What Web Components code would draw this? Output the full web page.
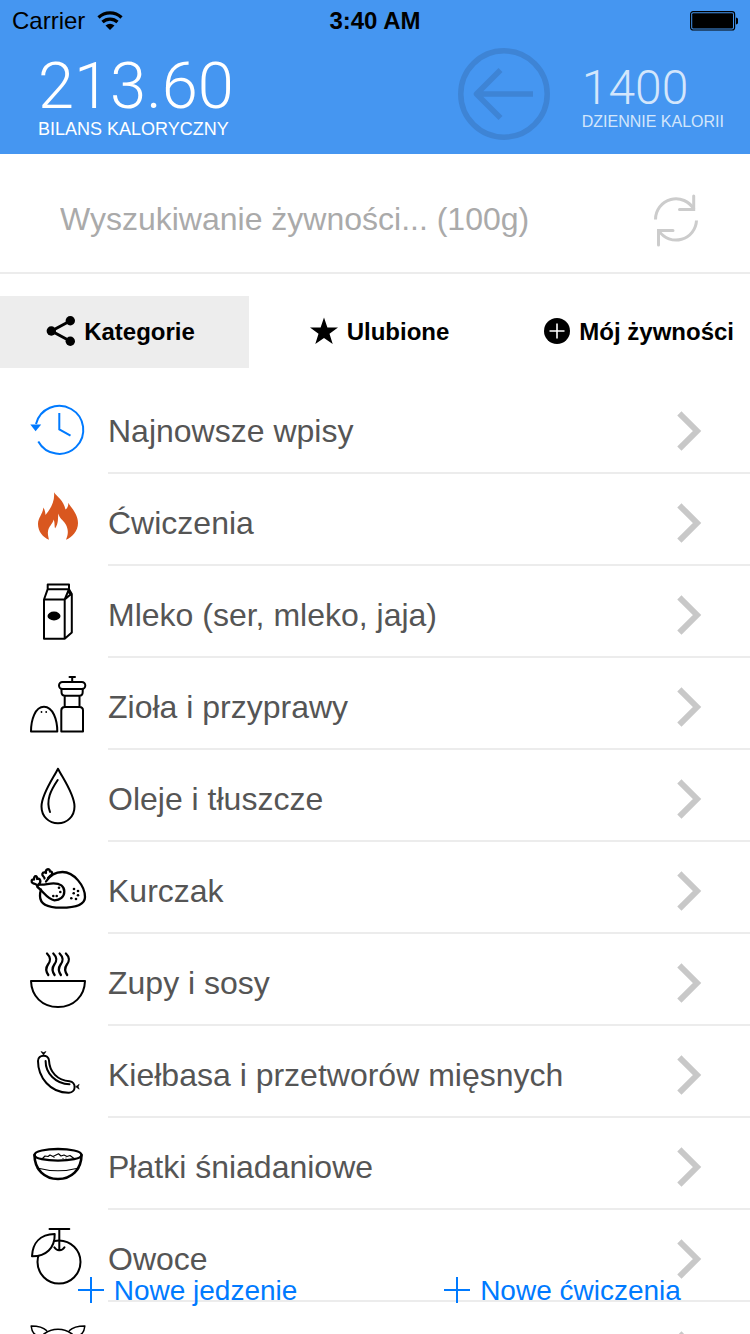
<!DOCTYPE html>
<html lang="pl">
<head>
<meta charset="utf-8">
<meta name="viewport" content="width=device-width, initial-scale=1">
<title>Bilans kaloryczny</title>
<style>
  html, body { margin: 0; height: 100%; }
  body {
    font-family: "Liberation Sans", Arial, sans-serif;
    background: #fff;
    color: #555;
    --blue: #4596f1;
    --tint: #007aff;
    --rule: #ececec;
  }
</style>
</head>
<body>
<calorie-app></calorie-app>

<script>
const define = (name, html, setup) => {
  const template = document.createElement('template');
  template.innerHTML = html;
  customElements.define(name, class extends HTMLElement {
    constructor() {
      super();
      this.attachShadow({ mode: 'open' }).append(template.content.cloneNode(true));
    }
    connectedCallback() { if (setup) setup(this, this.shadowRoot); }
  });
};

/* Category drawings share one 60x90 box, as tall as the row they sit in. */
const pen = (width = 2) => `fill="none" stroke="#000" stroke-width="${width}" stroke-linejoin="round" stroke-linecap="round"`;
const S = pen();
const dots = (list, r) => list.map(([x, y]) => `<circle cx="${x}" cy="${y}" r="${r}" fill="#000"/>`).join('');
const CATEGORY = {
  clock: `<g fill="none" stroke="#007aff" stroke-width="2"><path d="M36 42A24 24 0 1 1 38.300 59.500"/><path d="M59.300 31V47.300L70.500 53.700"/></g><path d="M30.300 42.500H41.200L35.600 49.300Z" fill="#007aff"/>`,
  flame: `<path d="M54 18.300C57 23 63.500 26 65.500 35.500C67.500 34 68.500 31.500 68.300 28.700C71 33.500 78 40 78 49C78 57 72 63.500 66 65.700C68 61 69 56 65.500 50C63 46 59 44 58.500 39.500C57.500 44 59 49 55 54.500C54.300 52 55 49 53.700 45.500C52.500 50.500 48.500 52 47.900 58C47.700 61 48.500 63.500 49 65.700C43 63.500 38 57.500 38 50C38 43.500 43 40 43.300 33.500C44.700 35.500 45.300 38 45.500 41C51 34.500 55 27 54 18.300Z" fill="#d9571f"/>`,
  milk: `<g ${S}><path d="M44 33.500H64.700V72.700H44ZM44 33.500L47.700 23.200V18.500H69V23.200L64.700 33.500M47.700 23.200H69L71.800 28V66.500L64.700 72.700M64.700 33.500L70.500 28.500L68.500 25.500"/></g><ellipse cx="54" cy="50" rx="6.500" ry="4.400"/>`,
  spice: `<g ${S}><path d="M31 73.500C31 62 35 48.700 44 48.700S57.300 62 57.300 73.500Z"/><path d="M69.500 18.900H75M72.200 19V24"/><rect x="59" y="24" width="26.300" height="7" rx="3.500"/><path d="M61.500 31V34Q61.500 37.700 65 37.700H79.500Q82.700 37.700 82.700 34V31M64.700 37.700V49M79.500 37.700V49M61.300 73.500V52.500Q61.300 49 64.700 49H79.500Q83 49 83 52.500V73.500Z"/></g>${dots([[41.5,54],[46.2,54]],.9)}`,
  drop: `<g ${S}><path d="M58 18.700C54 27 41.500 44 41.500 56.500C41.500 66.500 49 73.300 58 73.300S74.500 66.500 74.500 56.500C74.500 44 62 27 58 18.700Z"/><path d="M57.700 30C51 40 45.500 50 50 62"/></g>`,
  chicken: `<g ${pen(2.3)}><path d="M46 39.500C50 33 56 30 62.500 30C74 30 85 44 85 55C85 63 76 65.700 61 65.700C48 65.700 40 63 40 54Q40 50.500 41 47.500"/><path d="M38.500 42.300C43 43.500 48 41.300 53.500 41.300C60 41.300 64.300 44.500 64.300 49.500C64.300 55 60 58.300 54.500 58.300C47 57 44 50 37.500 45"/><path d="M38.500 43C42 39 40 36 37 37C38 33.500 33.500 33 34 37.500C31 37 31 40.500 33 41.300C35.500 42.500 36 40.500 37.500 44.500M44.500 36.500C45 35 42 34.500 42.300 32C43 29.500 45.500 30.500 46 31C45 27.500 49.500 25.500 50 29.500C53 29 52.500 33 50.500 33.500L48 36"/></g>${dots([[74,47],[78,49],[73.7,51.3],[78,53.3],[71.3,56.3],[76,57],[59,45.7],[60.3,50],[56.7,54],[53.3,54]],1.3)}`,
  soup: `<g ${S}><path d="M31 47H85C84.500 62 74 73 58 73S31.500 62 31 47Z"/>${[47,53.3,59.6,65.9].map(x => `<path stroke-width="2.300" d="M${x} 19.500C${x + 4.5} 24 ${x + 3.5} 27 ${x + 1} 30.500C${x - 1.5} 34 ${x - 1.5} 37 ${x + 1.3} 41"/>`).join('')}</g>`,
  sausage: `<g ${S}><path d="M38 35C38 28 48.700 28 49 34.500C49.500 46 57.500 54.500 69.500 55.300C76.500 56 76.300 66.500 69 66.700C50 67 38 51 38 35Z"/><path d="M45.600 35C45.500 47 55.500 58 69.500 58.300"/></g><path d="M41 25.500L43.500 26.500L46 25.500L43.500 29ZM79.200 58.300L78.200 60.700L79.200 63.200L75.700 60.700Z" stroke="#000" stroke-width=".6"/>`,
  cereal: `<g ${S}><path d="M34.500 37C34.500 52 45 61 58 61S81.500 52 81.500 37" stroke-width="2.600"/><path d="M34.500 37C34.500 29 81.500 29 81.500 37C81.500 44.500 34.500 44.500 34.500 37Z" stroke-width="2.300"/><path d="M37 50Q58 55.500 79 50M42.500 40.500L45 38L48 38.500L50 37L53 38.500L56 37L58.500 35.800L61 38L64 37L67 38.500L70 37.500L74 40.500" stroke-width="1.200"/></g>${dots([[63,40.5],[66,40],[54,39.5]],.6)}`,
  fruit: `<g ${S}><circle cx="59" cy="52" r="21.500"/><path d="M32 46.300C32.500 33 40 24.500 54.700 24C55 38 46 46.500 32 46.300Z" fill="#fff"/><path d="M49.500 19H69.300M59.300 19V40M54.300 37.300Q56.500 40.500 59.300 40.300Q62.500 40.500 64.500 37.300"/></g>`,
  animal: `<g ${pen(1.6)}><path d="M36 33C32 31 31.500 27 31.200 24C37 24 43 25 46.500 28.500M80 33C84 31 84.500 27 84.800 24C79 24 73 25 69.500 28.500M44 32Q50 27.300 58 27.300T72 32"/></g>`
};

define('category-row', `
  <style>
    :host { display: block; flex: none; }
    a { display: flex; padding-left: 28px; gap: 20px; min-height: 92px; color: inherit; text-decoration: none; }
    .body {
      flex: 1; min-width: 0; display: flex; align-items: center; justify-content: space-between;
      padding: 8px 48px 0 0; border-bottom: 2px solid var(--rule);
      font-size: 32px; line-height: 40px;
    }
    svg { display: block; flex: none; }
  </style>
  <a href="#">
    <svg class="picture" width="60" height="90" viewBox="28 0 60 90" aria-hidden="true"></svg>
    <span class="body">
      <span><slot></slot></span>
      <svg width="26" height="44" viewBox="0 0 26 44" fill="none" stroke="#c8c8c8" stroke-width="6" stroke-linecap="square" aria-hidden="true"><path d="M5.500 6.500L21 22L5.500 37.500"/></svg>
    </span>
  </a>`,
  (host, root) => { root.querySelector('.picture').innerHTML = CATEGORY[host.getAttribute('icon')]; });

define('status-bar', `
  <style>
    :host { display: grid; grid-template-columns: 1fr auto 1fr; align-items: center; padding: 0 12px; height: 42px; color: #000; font-size: 24px; line-height: 28px; }
    .left { display: flex; align-items: center; gap: 12px; }
    .right { justify-self: end; }
    svg { display: block; }
  </style>
  <span class="left">Carrier
    <svg width="26" height="20" viewBox="0 0 26 20" fill="none" stroke="#000" stroke-width="3.200" aria-hidden="true"><path d="M1.500 6.500A16.500 16.500 0 0 1 24.500 6.500M5.500 11A11 11 0 0 1 20.500 11"/><path d="M8.500 14.500Q13 11 17.500 14.500L13 19Z" fill="#000" stroke="none"/></svg>
  </span>
  <b>3:40 AM</b>
  <svg class="right" width="48" height="20" viewBox="0 0 48 20" aria-hidden="true"><rect x=".600" y=".700" width="44" height="18.300" rx="2.500" fill="none" stroke="#000" stroke-width="1.200"/><rect x="2.200" y="2.300" width="40.800" height="15.200" rx="1"/><path d="M46 6.500Q48.500 7 48.500 10T46 13.500Z"/></svg>`);

define('calorie-figure', `
  <style>
    :host { display: block; padding-top: 5px; color: #fff; }
    .value { font-family: Roboto, sans-serif; font-weight: 300; font-size: 65px; line-height: 64px; }
    .label { font-size: 18px; line-height: 22px; white-space: nowrap; }
    :host([small]) { color: #d3e6fc; }
    :host([small]) .value { font-size: 48px; line-height: 50px; }
    :host([small]) .label { font-size: 16px; line-height: 18px; }
  </style>
  <div class="value"><slot></slot></div>
  <div class="label"><slot name="label"></slot></div>`);

define('calorie-header', `
  <style>
    :host { display: block; flex: none; background: var(--blue); }
    .row { display: flex; align-items: center; padding: 6px 26px 14px 38px; }
    button { margin: 0 32px 0 auto; padding: 0; border: 0; background: none; }
    svg { display: block; }
  </style>
  <status-bar></status-bar>
  <div class="row">
    <calorie-figure>213.60<span slot="label">BILANS KALORYCZNY</span></calorie-figure>
    <button type="button" aria-label="Wstecz">
      <svg width="92" height="92" viewBox="0 0 92 92" fill="none" stroke="#3e84d5" stroke-width="5.500" stroke-linejoin="round"><circle cx="46" cy="46" r="43.200"/><path d="M75 46H19M42.500 22L18.500 46L42.500 70"/></svg>
    </button>
    <calorie-figure small>1400<span slot="label">DZIENNIE KALORII</span></calorie-figure>
  </div>`);

define('food-search', `
  <style>
    :host { display: flex; flex: none; align-items: center; padding: 32px 48px 18px 60px; height: 68px; border-bottom: 2px solid var(--rule); }
    input { flex: 1; min-width: 0; padding: 0 0 2px; border: 0; outline: 0; background: none; font: 32px/40px "Liberation Sans", Arial, sans-serif; color: #555; }
    input::placeholder { color: #aaa; opacity: 1; }
    button { border: 0; padding: 0; background: none; }
    svg { display: block; }
  </style>
  <input type="search" aria-label="Wyszukiwanie żywności" placeholder="Wyszukiwanie żywności... (100g)">
  <button type="button" aria-label="Odśwież">
    <svg width="52" height="56" viewBox="0 0 52 56" fill="none" stroke="#ccc" stroke-width="3" stroke-linecap="round"><path d="M5.500 27.500A20.500 20.500 0 0 1 44 17.500M46.500 28.500A20.500 20.500 0 0 1 9 39" stroke-linecap="butt"/><path d="M43.700 4V17.500H29.500M8.500 53V38.500H23"/></svg>
  </button>`);

define('filter-tab', `
  <style>
    :host { display: flex; }
    button { flex: 1; display: flex; align-items: center; justify-content: center; gap: 8px; height: 72px; padding: 0; border: 0; background: none; color: #000; font: bold 24px/28px "Liberation Sans", Arial, sans-serif; white-space: nowrap; }
    :host([selected]) button { background: #ededed; padding-right: 8px; }
    :host([end]) button { justify-content: flex-end; padding-right: 16px; }
  </style>
  <button type="button"><slot name="icon"></slot><span><slot></slot></span></button>`);

define('filter-tabs', `
  <style>
    :host { display: grid; flex: none; grid-template-columns: 249fr 260fr 241fr; padding: 22px 0 14px; }
    svg { display: block; }
  </style>
  <filter-tab selected><svg slot="icon" width="30" height="32" viewBox="0 0 30 32" aria-hidden="true"><path d="M24 5L5.500 15L24 25" fill="none" stroke="#000" stroke-width="3"/><circle cx="24.300" cy="4.800" r="4.700"/><circle cx="5.300" cy="15" r="4.700"/><circle cx="24.300" cy="25.200" r="4.700"/></svg>Kategorie</filter-tab>
  <filter-tab><svg slot="icon" width="30" height="30" viewBox="0 0 30 30" aria-hidden="true"><path d="M15 .500L18.400 10.500H29L20.500 16.800L23.700 27L15 20.900L6.300 27L9.500 16.800L1 10.500H11.600Z"/></svg>Ulubione</filter-tab>
  <filter-tab end><svg slot="icon" width="28" height="28" viewBox="0 0 28 28" aria-hidden="true"><circle cx="14" cy="13" r="13"/><path d="M6.500 13H21.500M14 5.500V20.500" stroke="#fff" stroke-width="1.600"/></svg>Mój żywności</filter-tab>`);

define('add-button', `
  <style>
    :host { display: flex; justify-content: center; }
    button { display: flex; align-items: center; gap: 10px; padding: 0; border: 0; background: none; color: var(--tint); font: 28px/32px "Liberation Sans", Arial, sans-serif; white-space: nowrap; }
    svg { display: block; }
  </style>
  <button type="button"><svg width="26" height="28" viewBox="0 0 26 28" stroke="#007aff" stroke-width="2" aria-hidden="true"><path d="M0 13H26M13 0V26"/></svg><span><slot></slot></span></button>`);

define('calorie-app', `
  <style>
    :host { display: flex; flex-direction: column; height: 100vh; position: relative; overflow: hidden; }
    main { flex: 1; min-height: 0; overflow-y: auto; scrollbar-width: none; display: flex; flex-direction: column; }
    footer { position: absolute; left: 0; right: 0; bottom: 27px; display: grid; grid-template-columns: 1fr 1fr; }
  </style>
  <calorie-header></calorie-header>
  <food-search></food-search>
  <filter-tabs></filter-tabs>
  <main>
    <category-row icon="clock">Najnowsze wpisy</category-row>
    <category-row icon="flame">Ćwiczenia</category-row>
    <category-row icon="milk">Mleko (ser, mleko, jaja)</category-row>
    <category-row icon="spice">Zioła i przyprawy</category-row>
    <category-row icon="drop">Oleje i tłuszcze</category-row>
    <category-row icon="chicken">Kurczak</category-row>
    <category-row icon="soup">Zupy i sosy</category-row>
    <category-row icon="sausage">Kiełbasa i przetworów mięsnych</category-row>
    <category-row icon="cereal">Płatki śniadaniowe</category-row>
    <category-row icon="fruit">Owoce</category-row>
    <category-row icon="animal"></category-row>
  </main>
  <footer>
    <add-button>Nowe jedzenie</add-button>
    <add-button>Nowe ćwiczenia</add-button>
  </footer>`);
</script>
</body>
</html>
